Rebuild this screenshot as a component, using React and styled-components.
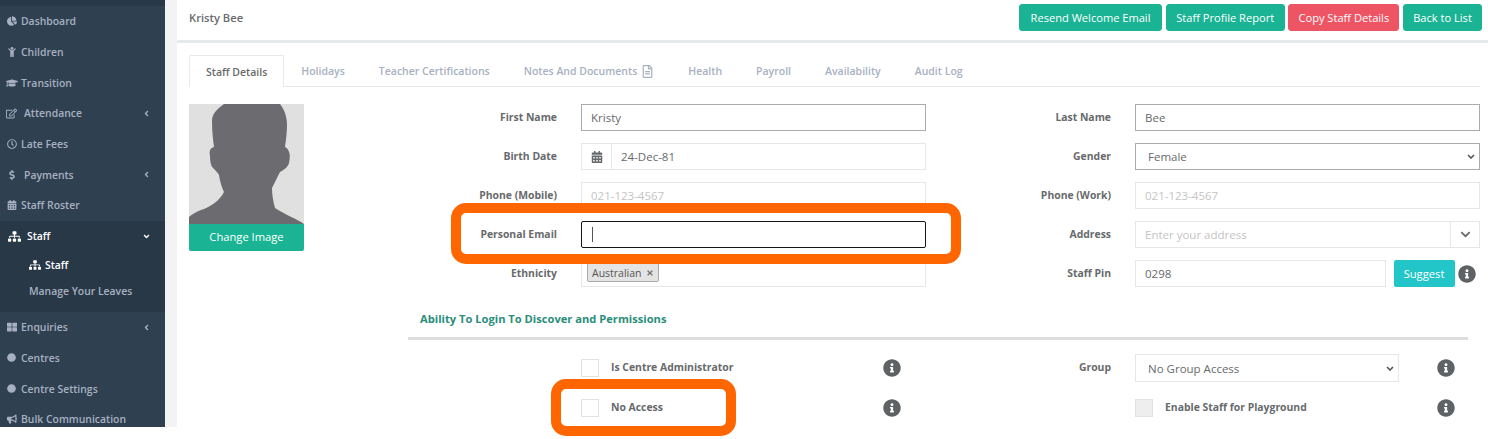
import styled, { createGlobalStyle } from "styled-components";
import {
  FaChartPie, FaChild, FaGraduationCap, FaRegEdit, FaRegClock, FaDollarSign,
  FaCalendarAlt, FaSitemap, FaAngleLeft, FaAngleDown, FaThLarge, FaCircle,
  FaBullhorn, FaInfoCircle, FaChevronDown, FaRegFileAlt, FaTimes,
} from "react-icons/fa";

const GlobalStyle = createGlobalStyle`
  html, body { margin: 0; padding: 0; background: #fff; overflow: hidden; }
  body { font-family: "Open Sans", "Liberation Sans", sans-serif; color: #676a6c; }
  * { box-sizing: border-box; }
`;

const Page = styled.div`
  position: relative;
  width: 1488px;
  height: 439px;
  overflow: hidden;
  background: #fff;
`;
const Shell = styled.div`
  display: flex;
  height: 427px;
  overflow: hidden;
  background: #f3f3f4;
`;
const Sidebar = styled.nav`
  width: 165px;
  flex: none;
  padding-top: 6px;
  background: linear-gradient(#293846 6px, #2f4050 6px);
  overflow: hidden;
`;
const NavItem = styled.div`
  display: flex;
  align-items: center;
  height: ${({ $open }) => ($open ? "31px" : "30.7px")};
  padding-left: ${({ $open }) => ($open ? "8px" : "6px")};
  padding-right: 14px;
  font-size: 10.4px;
  font-weight: 600;
  white-space: nowrap;
  color: ${({ $open }) => ($open ? "#fff" : "#a7b1c2")};
`;
const NavIcon = styled.span`
  display: flex;
  justify-content: center;
  align-items: center;
  width: ${({ $w }) => $w || 11}px;
  font-size: ${({ $size }) => $size || 11}px;
  margin-right: ${({ $gap }) => $gap || 4}px;
  flex: none;
`;
const NavLabel = styled.span`
  flex: 1;
`;
const OpenSection = styled.div`
  background: #293846;
  padding-bottom: 8px;
`;
const SubItem = styled.div`
  display: flex;
  align-items: center;
  gap: 4px;
  height: 26px;
  padding-left: 29px;
  font-size: 10.4px;
  font-weight: 600;
  color: ${({ $active }) => ($active ? "#fff" : "#a7b1c2")};
`;
const Main = styled.main`
  margin-left: 12px;
  flex: 1;
  background: #fff;
  min-width: 0;
`;
const Header = styled.header`
  display: flex;
  justify-content: space-between;
  height: 43px;
  padding: 4px 6px 0 12px;
  border-bottom: 3px solid #e7eaec;
`;
const Name = styled.h2`
  margin: 0;
  font-size: 11.2px;
  font-weight: 600;
  line-height: 27px;
  color: #676a6c;
`;
const ButtonRow = styled.div`
  display: flex;
  gap: 3.67px;
`;
const Button = styled.button`
  height: 27px;
  padding: 0 0 1px;
  width: ${({ $w }) => $w}px;
  border: 1px solid ${({ $red }) => ($red ? "#ed5565" : "#1ab394")};
  border-radius: 3px;
  background: ${({ $red }) => ($red ? "#ed5565" : "#1ab394")};
  color: #fff;
  font: 400 11.1px "Open Sans", sans-serif;
`;
const Tabs = styled.div`
  display: flex;
  height: 32px;
  margin: 12px 8px 0 12px;
  border-bottom: 1px solid #e7eaec;
`;
const Tab = styled.div`
  display: flex;
  align-items: center;
  gap: 4px;
  height: ${({ $active }) => ($active ? "32px" : "31px")};
  padding: 0 16px;
  font-size: 10.5px;
  font-weight: 600;
  white-space: nowrap;
  color: ${({ $active }) => ($active ? "#676a6c" : "#a7b1c2")};
  background: #fff;
  border: 1px solid ${({ $active }) => ($active ? "#e7eaec" : "transparent")};
  border-bottom: 0;
  border-radius: 2px 2px 0 0;
`;
const Body = styled.div`
  display: flex;
  padding: 17px 8px 0 12px;
`;
const PhotoColumn = styled.div`
  width: 115px;
  margin-right: 104px;
  flex: none;
`;
const Portrait = styled.svg`
  display: block;
  width: 115px;
  height: 120px;
`;
const ChangeImage = styled.button`
  display: block;
  width: 100%;
  height: 27px;
  padding: 0 0 2px;
  border: 0;
  border-radius: 0 0 2px 2px;
  background: #1ab394;
  color: #fff;
  font: 400 11.2px "Open Sans", sans-serif;
`;
const FormColumn = styled.div`
  flex: 1;
  min-width: 0;
`;
const FormGrid = styled.div`
  display: grid;
  grid-template-columns: 149px 345px 161px 345px;
  column-gap: 24px;
  grid-auto-rows: 27px;
  row-gap: 12.1px;
  align-items: center;
`;
const Label = styled.label`
  text-align: right;
  margin-bottom: 2px;
  font-size: 10.4px;
  font-weight: 700;
  color: #676a6c;
  white-space: nowrap;
`;
const Input = styled.input`
  width: 100%;
  min-width: 0;
  height: 27px;
  padding: 0 9px 1px;
  border: 1px solid ${({ $dark }) => ($dark ? "#ababab" : "#e5e6e7")};
  background: #fff;
  color: #676a6c;
  font: 400 11.5px "Open Sans", sans-serif;
  outline: none;
  &::placeholder { color: #c4c4c4; opacity: 1; }
`;
const Select = styled.select`
  appearance: none;
  width: ${({ $w }) => ($w ? `${$w}px` : "100%")};
  height: ${({ $h }) => $h || 27}px;
  padding: 0 8px 0 12px;
  border: 1px solid ${({ $dark }) => ($dark ? "#ababab" : "#e5e6e7")};
  border-radius: 0;
  background: #fff url("data:image/svg+xml,%3Csvg xmlns='http://www.w3.org/2000/svg' width='8' height='5'%3E%3Cpath d='M1 1l3 3 3-3' fill='none' stroke='%23555' stroke-width='1.6'/%3E%3C/svg%3E") no-repeat right 4px center;
  color: #676a6c;
  font: 400 11.5px "Open Sans", sans-serif;
`;
const InputGroup = styled.div`
  display: flex;
  align-items: center;
  height: 27px;
`;
const Addon = styled.span`
  display: flex;
  align-items: center;
  justify-content: center;
  flex: none;
  width: ${({ $w }) => $w}px;
  height: 27px;
  border: 1px solid #e5e6e7;
  ${({ $left }) => ($left ? "border-right: 0;" : "border-left: 0;")}
  font-size: 11px;
  color: #676a6c;
`;
const FocusField = styled.div`
  display: flex;
  align-items: center;
  height: 27px;
  padding-left: 10px;
  border: 1.5px solid #151515;
  border-radius: 2px;
  background: #fff;
`;
const Caret = styled.span`
  width: 1px;
  height: 15px;
  background: #555;
`;
const TagBox = styled.div`
  display: flex;
  align-items: center;
  height: 27px;
  padding: 0 0 2px 5px;
  border: 1px solid #e5e6e7;
`;
const Tag = styled.span`
  display: flex;
  align-items: center;
  gap: 4px;
  height: 19px;
  padding: 0 4px;
  border: 1px solid #aaa;
  border-radius: 2px;
  background: #e4e4e4;
  font-size: 10.5px;
  color: #555;
`;
const TagClose = styled(FaTimes)`
  width: 8px;
  height: 8px;
  color: #777;
`;
const SuggestButton = styled.button`
  width: 61px;
  height: 27px;
  flex: none;
  margin-left: 8px;
  padding: 0 0 1px;
  border: 0;
  border-radius: 2px;
  background: #23c6c8;
  color: #fff;
  font: 400 11.2px "Open Sans", sans-serif;
`;
const Info = styled(FaInfoCircle)`
  flex: none;
  width: 18px;
  height: 18px;
  color: #5f6265;
`;
const PinInfo = styled(Info)`
  margin: 0 4px 0 3.5px;
`;
const SectionTitle = styled.h3`
  margin: 24px 0 10px 12px;
  font-size: 11.15px;
  line-height: 16px;
  font-weight: 700;
  color: #2a8d7a;
`;
const Rule = styled.hr`
  margin: 0 12px 14px 0;
  height: 3px;
  border: 0;
  background: #ddd;
`;
const PermGrid = styled(FormGrid)`
  grid-auto-rows: 28px;
  row-gap: 12px;
`;
const CheckRow = styled.div`
  display: flex;
  align-items: center;
  height: 28px;
  padding-right: ${({ $pad }) => $pad || 0}px;
`;
const Check = styled.span`
  flex: none;
  width: 18px;
  height: 18px;
  margin-right: ${({ $gap }) => $gap}px;
  border: 1px solid #e2e2e2;
  background: ${({ $off }) => ($off ? "#eee" : "#fff")};
`;
const CheckLabel = styled.span`
  flex: 1;
  margin-bottom: 2px;
  font-size: 10.4px;
  font-weight: 700;
  white-space: nowrap;
  color: #676a6c;
`;
const SelectRow = styled.div`
  display: flex;
  align-items: center;
  gap: 37.5px;
`;
const Highlight = styled.div`
  position: absolute;
  left: ${({ $x }) => $x}px;
  top: ${({ $y }) => $y}px;
  width: ${({ $w }) => $w}px;
  height: ${({ $h }) => $h}px;
  border: 10px solid #ff6600;
  border-radius: 15px;
  pointer-events: none;
`;

const navTop = [
  { name: "Dashboard", icon: <FaChartPie />, size: 10 },
  { name: "Children", icon: <FaChild />, size: 10 },
  { name: "Transition", icon: <FaGraduationCap />, size: 12, w: 12, gap: 3 },
  { name: "Attendance", icon: <FaRegEdit />, size: 11, gap: 7, more: true },
  { name: "Late Fees", icon: <FaRegClock />, size: 10 },
  { name: "Payments", icon: <FaDollarSign />, size: 10, gap: 7, more: true },
  { name: "Staff Roster", icon: <FaCalendarAlt />, size: 10 },
];
const navBottom = [
  { name: "Enquiries", icon: <FaThLarge />, size: 10, more: true },
  { name: "Centres", icon: <FaCircle />, size: 9 },
  { name: "Centre Settings", icon: <FaCircle />, size: 9 },
  { name: "Bulk Communication", icon: <FaBullhorn />, size: 10 },
];
const tabs = ["Holidays", "Teacher Certifications", "Notes And Documents", "Health", "Payroll", "Availability", "Audit Log"];

const NavRow = ({ item }) => (
  <NavItem>
    <NavIcon $size={item.size} $w={item.w} $gap={item.gap}>{item.icon}</NavIcon>
    <NavLabel>{item.name}</NavLabel>
    {item.more && <FaAngleLeft size={9} />}
  </NavItem>
);

const App = () => (
  <Page>
    <GlobalStyle />
    <Shell>
      <Sidebar>
        {navTop.map((item) => <NavRow item={item} key={item.name} />)}
        <OpenSection>
          <NavItem $open>
            <NavIcon $size={13} $w={13} $gap={6}><FaSitemap /></NavIcon>
            <NavLabel>Staff</NavLabel>
            <FaAngleDown size={9} />
          </NavItem>
          <SubItem $active><FaSitemap size={12} />Staff</SubItem>
          <SubItem>Manage Your Leaves</SubItem>
        </OpenSection>
        {navBottom.map((item) => <NavRow item={item} key={item.name} />)}
      </Sidebar>
      <Main>
        <Header>
          <Name>Kristy Bee</Name>
          <ButtonRow>
            <Button $w={143}>Resend Welcome Email</Button>
            <Button $w={119}>Staff Profile Report</Button>
            <Button $w={111} $red>Copy Staff Details</Button>
            <Button $w={79}>Back to List</Button>
          </ButtonRow>
        </Header>
        <Tabs>
          <Tab $active>Staff Details</Tab>
          {tabs.map((tab) => (
            <Tab key={tab}>
              {tab}
              {tab === "Notes And Documents" && <FaRegFileAlt size={13} />}
            </Tab>
          ))}
        </Tabs>
        <Body>
          <PhotoColumn>
            <Portrait viewBox="0 0 115 120">
              <rect width="115" height="120" fill="#e0e0e0" />
              <path
                fill="#6b6b70"
                d="M35 0 C28 5 23 10 23 17 C23 27 24 36 25 43 C21 44 20 47 21 52 C21 58 22 62 24 64 C27 67 29 69 30 71 C31 78 33 84 35 88 C31 96 22 103 12 106 C7 108 3 110 0 113 L0 120 L115 120 C108 115 95 110 86 104 C84 97 83 90 83 84 C86 78 89 72 91 68 C95 66 99 63 100 59 C101 54 101 50 100 48 C99 45 98 44 96 43 C97 36 98 28 98 21 C98 12 95 5 91 0 Z"
              />
            </Portrait>
            <ChangeImage>Change Image</ChangeImage>
          </PhotoColumn>
          <FormColumn>
            <FormGrid>
              <Label>First Name</Label>
              <Input $dark defaultValue="Kristy" />
              <Label>Last Name</Label>
              <Input $dark defaultValue="Bee" />

              <Label>Birth Date</Label>
              <InputGroup>
                <Addon $left $w={30}><FaCalendarAlt size={12} /></Addon>
                <Input defaultValue="24-Dec-81" />
              </InputGroup>
              <Label>Gender</Label>
              <Select $dark defaultValue="Female"><option>Female</option></Select>

              <Label>Phone (Mobile)</Label>
              <Input placeholder="021-123-4567" />
              <Label>Phone (Work)</Label>
              <Input placeholder="021-123-4567" />

              <Label>Personal Email</Label>
              <FocusField><Caret /></FocusField>
              <Label>Address</Label>
              <InputGroup>
                <Input placeholder="Enter your address" />
                <Addon $w={29}><FaChevronDown size={11} /></Addon>
              </InputGroup>

              <Label>Ethnicity</Label>
              <TagBox>
                <Tag>Australian <TagClose /></Tag>
              </TagBox>
              <Label>Staff Pin</Label>
              <InputGroup>
                <Input defaultValue="0298" />
                <SuggestButton>Suggest</SuggestButton>
                <PinInfo />
              </InputGroup>
            </FormGrid>
            <SectionTitle>Ability To Login To Discover and Permissions</SectionTitle>
            <Rule />
            <PermGrid>
              <span />
              <CheckRow $pad={25.5}>
                <Check $gap={12} />
                <CheckLabel>Is Centre Administrator</CheckLabel>
                <Info />
              </CheckRow>
              <Label>Group</Label>
              <SelectRow>
                <Select $w={264} $h={28} defaultValue="No Group Access"><option>No Group Access</option></Select>
                <Info />
              </SelectRow>

              <span />
              <CheckRow $pad={25.5}>
                <Check $gap={12} />
                <CheckLabel>No Access</CheckLabel>
                <Info />
              </CheckRow>
              <span />
              <CheckRow $pad={25.5}>
                <Check $gap={12} $off />
                <CheckLabel>Enable Staff for Playground</CheckLabel>
                <Info />
              </CheckRow>
            </PermGrid>
          </FormColumn>
        </Body>
      </Main>
    </Shell>
    <Highlight $x={451} $y={203} $w={510} $h={61} />
    <Highlight $x={551} $y={379} $w={185} $h={57} />
  </Page>
);

export default App;
